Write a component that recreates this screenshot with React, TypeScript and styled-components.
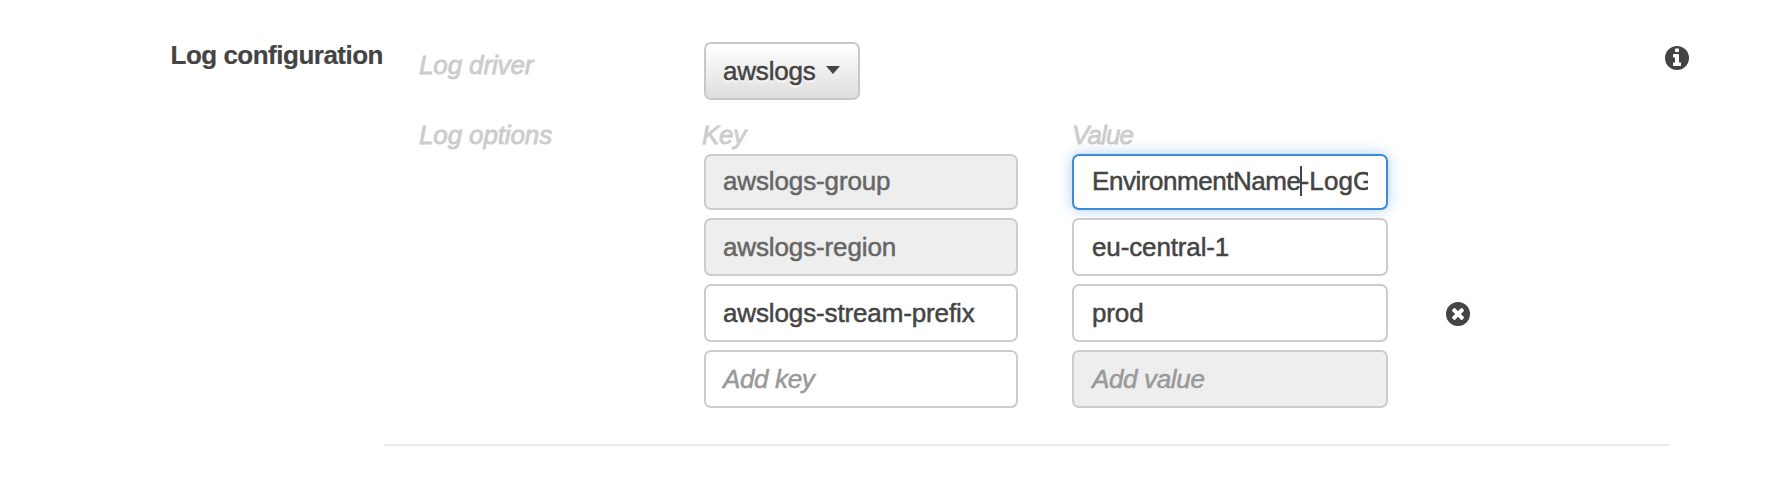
import React from "react";
import styled, { createGlobalStyle } from "styled-components";

const GlobalStyle = createGlobalStyle`
  *, *::before, *::after { box-sizing: border-box; }
  body {
    margin: 0;
    background: #fff;
    color: #444;
    font: 26px/30px "Liberation Sans", Arial, sans-serif;
    -webkit-text-stroke: 0.5px currentColor;
  }
`;

const Page = styled.main`
  height: 478px;
  padding-top: 39px;
  overflow: hidden;
`;

const Section = styled.section`
  display: flex;
  align-items: flex-start;
  height: 405px;
`;

const SectionTitle = styled.h2`
  width: 384px;
  margin: 0;
  padding: 1px 1px 0 0;
  font-size: 26px;
  line-height: 30px;
  font-weight: bold;
  letter-spacing: -0.5px;
  text-align: right;
  white-space: nowrap;
  -webkit-text-stroke: 0.2px currentColor;
`;

const Body = styled.div`
  width: 1281px;
  padding: 3px 0 0 34px;
`;

const FormRow = styled.div<{ $gap?: number }>`
  display: flex;
  align-items: flex-start;
  margin-top: ${(p) => p.$gap ?? 0}px;
`;

const Caption = styled.div<{ $top?: number }>`
  width: 286px;
  padding: ${(p) => p.$top ?? 0}px 0 0 1px;
  color: #ccc;
  font-style: italic;
  letter-spacing: -0.13px;
  -webkit-text-stroke-width: 0.8px;
`;

const SelectButton = styled.button`
  display: flex;
  align-items: center;
  width: 156px;
  height: 58px;
  padding: 0 0 0 17px;
  gap: 10px;
  border: 2px solid #c8c8c8;
  border-radius: 7px;
  background: linear-gradient(#fff, #dedede);
  color: #444;
  font: inherit;
  letter-spacing: -0.2px;
  text-shadow: 0 2px 2px #fff;
`;

const Chevron = styled.svg`
  width: 14px;
  height: 8px;
  margin-top: -2px;
  fill: #444;
`;

const Options = styled.div`
  display: grid;
  grid-template-columns: 314px 316px 24px;
  column-gap: 54px;
  row-gap: 8px;
`;

const ColumnName = styled.div<{ $shift: number; $tracking: number }>`
  height: 27px;
  margin-left: ${(p) => p.$shift}px;
  color: #ccc;
  font-style: italic;
  letter-spacing: ${(p) => p.$tracking}px;
  -webkit-text-stroke-width: 0.8px;
`;

const Heads = styled.div`
  display: grid;
  grid-template-columns: 314px 316px;
  column-gap: 54px;
  height: 34px;
`;

const Field = styled.div<{
  $disabled?: boolean;
  $focused?: boolean;
  $placeholder?: boolean;
  $first?: boolean;
  $inset?: number;
}>`
  display: flex;
  align-items: center;
  height: ${(p) => (p.$first ? 56 : 58)}px;
  padding: 0 18px ${(p) => (p.$first ? 2 : 0)}px ${(p) => p.$inset ?? 17}px;
  border: 2px solid ${(p) => (p.$focused ? "#3b8ade" : "#ccc")};
  border-radius: 7px;
  background: ${(p) => (p.$disabled ? "#eee" : "#fff")};
  box-shadow: ${(p) => (p.$focused ? "0 0 14px rgba(59, 138, 222, 0.42)" : "none")};
  color: ${(p) => (p.$placeholder ? "#999" : p.$disabled ? "#666" : "#444")};
  font-style: ${(p) => (p.$placeholder ? "italic" : "normal")};
  letter-spacing: ${(p) => (p.$placeholder ? -0.35 : -0.13)}px;
`;

const FieldText = styled.div<{ $clip?: boolean }>`
  position: relative;
  width: 100%;
  overflow: ${(p) => (p.$clip ? "hidden" : "visible")};
  white-space: nowrap;
`;

const Tracked = styled.span<{ $by: number }>`
  letter-spacing: ${(p) => p.$by}px;
`;

const TextCursor = styled.span`
  position: absolute;
  top: 0;
  left: 208px;
  width: 2px;
  height: 30px;
  background: #444;
`;

const RemoveSlot = styled.div`
  display: flex;
  align-items: center;
  height: 60px;
  margin: 0 0 -2px 4px;
`;

const RoundIcon = styled.svg`
  flex: none;
  width: 24px;
  height: 24px;
`;

const InfoSlot = styled.div`
  padding-top: 7px;
  line-height: 0;
`;

const Divider = styled.div`
  width: 1286px;
  height: 2px;
  margin-left: 384px;
  background: #ededed;
`;

const infoPath =
  "M1024 1376v-160q0-14-9-23t-23-9h-96V672q0-14-9-23t-23-9H544q-14 0-23 9t-9 23v160q0 14 9 23t23 9h96v320h-96q-14 0-23 9t-9 23v160q0 14 9 23t23 9h448q14 0 23-9t9-23zM896 480V320q0-14-9-23t-23-9H672q-14 0-23 9t-9 23v160q0 14 9 23t23 9h192q14 0 23-9t9-23z";
const crossPath =
  "M1149 1122q0-26-19-45L949 896l181-181q19-19 19-45 0-27-19-46l-90-90q-19-19-46-19-26 0-45 19L768 715 587 534q-19-19-45-19-27 0-46 19l-90 90q-19 19-19 46 0 26 19 45l181 181-181 181q-19 19-19 45 0 27 19 46l90 90q19 19 46 19 26 0 45-19l181-181 181 181q19 19 45 19 27 0 46-19l90-90q19-19 19-46z";

function CircleIcon({ path, label }: { path: string; label: string }) {
  return (
    <RoundIcon viewBox="0 128 1536 1536" role="img" aria-label={label}>
      <circle cx="768" cy="896" r="768" fill="#444" />
      <path d={path} fill="#fff" />
    </RoundIcon>
  );
}

export default function App() {
  return (
    <>
      <GlobalStyle />
      <Page>
        <Section>
          <SectionTitle>Log configuration</SectionTitle>
          <Body>
            <FormRow>
              <Caption $top={8}>Log driver</Caption>
              <SelectButton>
                awslogs
                <Chevron viewBox="0 0 14 8">
                  <path d="M0 0h14L7 8z" />
                </Chevron>
              </SelectButton>
            </FormRow>
            <FormRow $gap={20}>
              <Caption>Log options</Caption>
              <div>
                <Heads>
                  <ColumnName $shift={-2} $tracking={-0.3}>Key</ColumnName>
                  <ColumnName $shift={0} $tracking={-0.9}>Value</ColumnName>
                </Heads>
                <Options>
                  <Field $disabled $first><FieldText>awslogs-group</FieldText></Field>
                  <Field $focused $first $inset={18}>
                    <FieldText $clip>
                      <Tracked $by={-0.45}>EnvironmentName</Tracked>
                      <Tracked $by={0.1}>-LogG</Tracked>
                      <TextCursor />
                    </FieldText>
                  </Field>
                  <span />
                  <Field $disabled><FieldText>awslogs-region</FieldText></Field>
                  <Field $inset={18}><FieldText>eu-central-1</FieldText></Field>
                  <span />
                  <Field><FieldText>awslogs-stream-prefix</FieldText></Field>
                  <Field $inset={18}><FieldText>prod</FieldText></Field>
                  <RemoveSlot>
                    <CircleIcon path={crossPath} label="Remove option" />
                  </RemoveSlot>
                  <Field $placeholder><FieldText>Add key</FieldText></Field>
                  <Field $placeholder $disabled $inset={18}><FieldText>Add value</FieldText></Field>
                </Options>
              </div>
            </FormRow>
          </Body>
          <InfoSlot>
            <CircleIcon path={infoPath} label="About log configuration" />
          </InfoSlot>
        </Section>
        <Divider />
      </Page>
    </>
  );
}
